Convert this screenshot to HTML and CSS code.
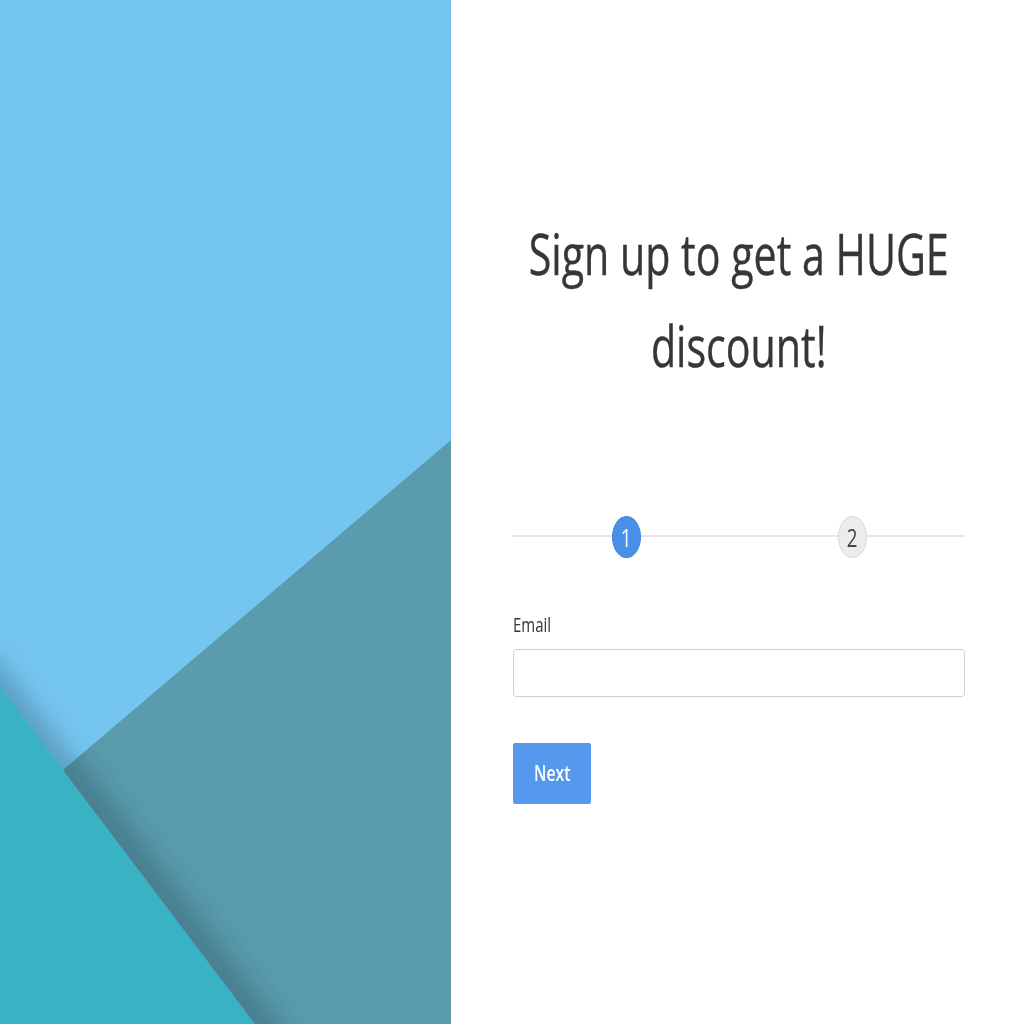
FILE: index.html
```html
<!DOCTYPE html>
<html lang="en">
<head>
<meta charset="utf-8">
<title>Sign up</title>
<link rel="stylesheet" href="styles.css">
</head>
<body>
<div class="page">
  <div class="art" aria-hidden="true">
    <svg viewBox="0 0 451 1024" width="451" height="1024" xmlns="http://www.w3.org/2000/svg">
      <defs>
        <filter id="blur" x="-50%" y="-50%" width="200%" height="200%">
          <feGaussianBlur stdDeviation="11"/>
        </filter>
        <filter id="blur2" x="-50%" y="-50%" width="200%" height="200%">
          <feGaussianBlur stdDeviation="14"/>
        </filter>
        <clipPath id="above">
          <polygon points="0,0 451,0 451,1024 255,1024 0,687"/>
        </clipPath>
        <clipPath id="tealclip">
          <polygon points="451,440 63,770 255,1024 451,1024"/>
        </clipPath>
      </defs>
      <rect width="451" height="1024" fill="#74c5ef"/>
      <polygon points="0,687 255,1024 0,1024" fill="#39b3c4"/>
      <g clip-path="url(#above)">
        <line x1="-20" y1="661" x2="275" y2="1050" stroke="#34607c" stroke-opacity="0.4" stroke-width="30" filter="url(#blur)"/>
      </g>
      <polygon points="451,440 63,770 255,1024 451,1024" fill="#5a9cad"/>
      <g clip-path="url(#tealclip)">
        <line x1="-20" y1="661" x2="275" y2="1050" stroke="#2c5866" stroke-opacity="0.45" stroke-width="40" filter="url(#blur2)"/>
      </g>
    </svg>
  </div>
  <main class="panel">
    <div class="title">
      <h1 class="title-text">Sign up to get a HUGE<br>discount!</h1>
    </div>
    <div class="steps">
      <div class="step"><span class="dot dot-active"><span class="sq">1</span></span></div>
      <div class="step"><span class="dot"><span class="sq">2</span></span></div>
    </div>
    <form class="form">
      <label class="label" for="email"><span class="sq sq-left">Email</span></label>
      <input class="input" id="email" type="email">
      <button class="btn" type="button"><span class="sq">Next</span></button>
    </form>
  </main>
</div>
</body>
</html>
```
FILE: styles.css
```css
html, body {
  margin: 0;
  height: 100%;
}
body {
  font-family: "Open Sans", "Noto Sans", sans-serif;
  background: #fff;
  overflow: hidden;
}
.page {
  display: flex;
  height: 1024px;
}
.art {
  flex: none;
  width: 451px;
}
.art svg {
  display: block;
  width: 451px;
  height: 1024px;
}
.panel {
  flex: 1;
  min-width: 0;
  padding: 207px 59px 0 62px;
  background: #fff;
}
.title {
  display: flex;
  justify-content: center;
  min-width: 0;
}
.title-text {
  flex: none;
  margin: 0;
  font-size: 56px;
  font-weight: 400;
  line-height: 92px;
  color: #363636;
  text-align: center;
  white-space: nowrap;
  transform: scaleX(0.735);
  -webkit-text-stroke: 0.4px #363636;
}
.sq {
  display: inline-block;
  transform: scaleX(0.75);
}
.sq-left {
  transform-origin: left center;
}
.steps {
  position: relative;
  display: flex;
  height: 42px;
  margin-top: 125px;
}
.steps::before {
  content: "";
  position: absolute;
  left: 0;
  right: 0;
  top: 19px;
  height: 2px;
  background: #e6e6e6;
}
.step {
  flex: 1;
  display: flex;
  justify-content: center;
}
.dot {
  position: relative;
  box-sizing: border-box;
  width: 29px;
  height: 42px;
  border-radius: 50%;
  background: #ececec;
  border: 1px solid #d8d8d8;
  display: flex;
  align-items: center;
  justify-content: center;
  font-size: 25px;
  line-height: 1;
  color: #444;
}
.dot-active {
  background: #4a8fe8;
  border-color: #3f84dc;
  color: #fff;
}
.form {
  margin-top: 55px;
}
.label {
  display: block;
  font-size: 20px;
  line-height: 24px;
  color: #333;
}
.input {
  display: block;
  box-sizing: border-box;
  width: 100%;
  height: 48px;
  margin: 12px 0 0;
  border: 1px solid #cfcfcf;
  border-radius: 3px / 5px;
  background: #fff;
}
.btn {
  display: block;
  margin-top: 46px;
  width: 78px;
  height: 61px;
  padding: 0;
  border: 0;
  border-radius: 2px / 3px;
  background: #5598ee;
  color: #fff;
  font-family: "Open Sans", "Noto Sans", sans-serif;
  font-size: 21px;
  font-weight: 600;
  line-height: 1;
}
```
